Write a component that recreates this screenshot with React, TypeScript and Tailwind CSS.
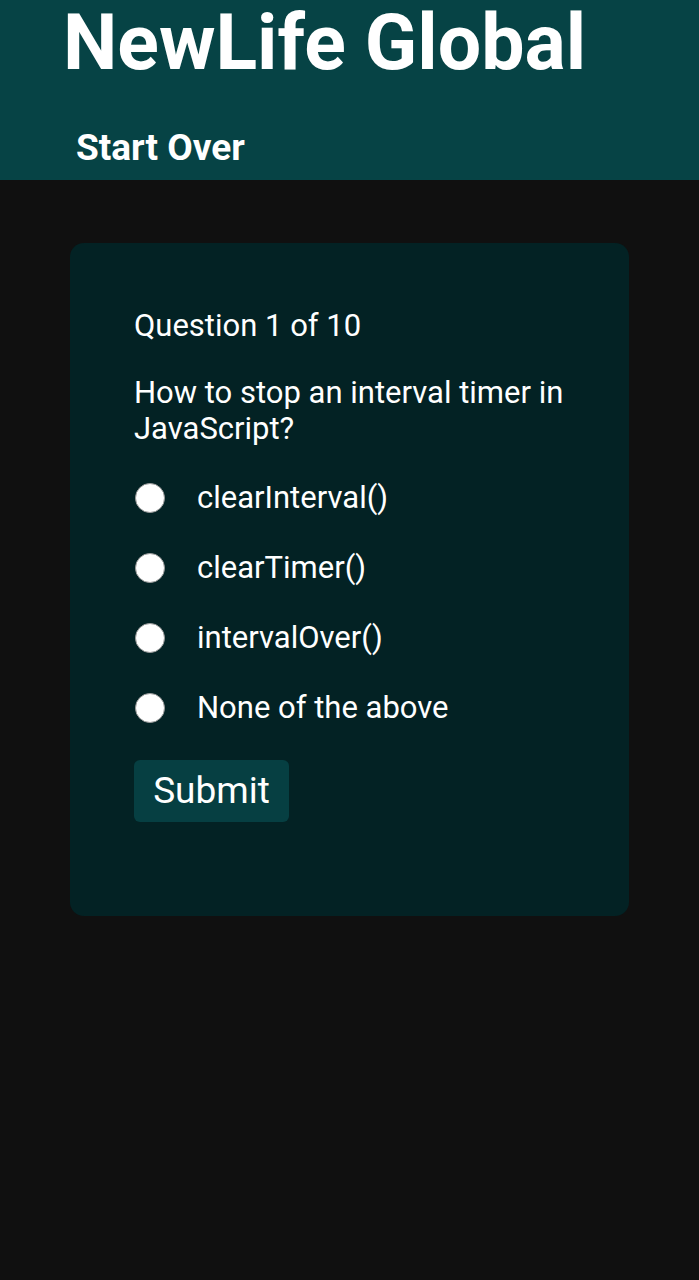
import { useState } from "react";

const options = ["clearInterval()", "clearTimer()", "intervalOver()", "None of the above"];

export default function App() {
  const [picked, setPicked] = useState<number | null>(null);

  return (
    <div className="min-h-[1280px] bg-[#101010] font-['Roboto',sans-serif] text-white">
      <header className="h-[180px] bg-[#064345] px-[63px]">
        <h1 className="pt-[1px] text-[77px] font-bold leading-[84px]">NewLife Global</h1>
        <button className="mt-[43px] ml-[13px] text-[37px] font-bold leading-[40px]">Start Over</button>
      </header>

      <main className="px-[70px] pt-[63px]">
        <div className="h-[673px] rounded-[14px] bg-[#032224] px-[64px] pt-[65px]">
          <p className="text-[31px] leading-[36px]">Question 1 of 10</p>
          <p className="mt-[31px] text-[31px] leading-[36px]">How to stop an interval timer in JavaScript?</p>

          <div className="mt-[16px] flex flex-col">
            {options.map((o, i) => (
              <label key={o} className="flex h-[70px] cursor-pointer items-center gap-[32px]" onClick={() => setPicked(i)}>
                <span className="ml-[1px] flex h-[30px] w-[30px] items-center justify-center rounded-full border border-[#9a9a9a] bg-white">
                  {picked === i && <span className="h-[14px] w-[14px] rounded-full bg-[#064345]" />}
                </span>
                <span className="text-[31px] leading-[36px]">{o}</span>
              </label>
            ))}
          </div>

          <button className="mt-[17px] h-[62px] w-[155px] rounded-[6px] bg-[#063f42] text-[37px] leading-[40px]">Submit</button>
        </div>
      </main>
    </div>
  );
}
